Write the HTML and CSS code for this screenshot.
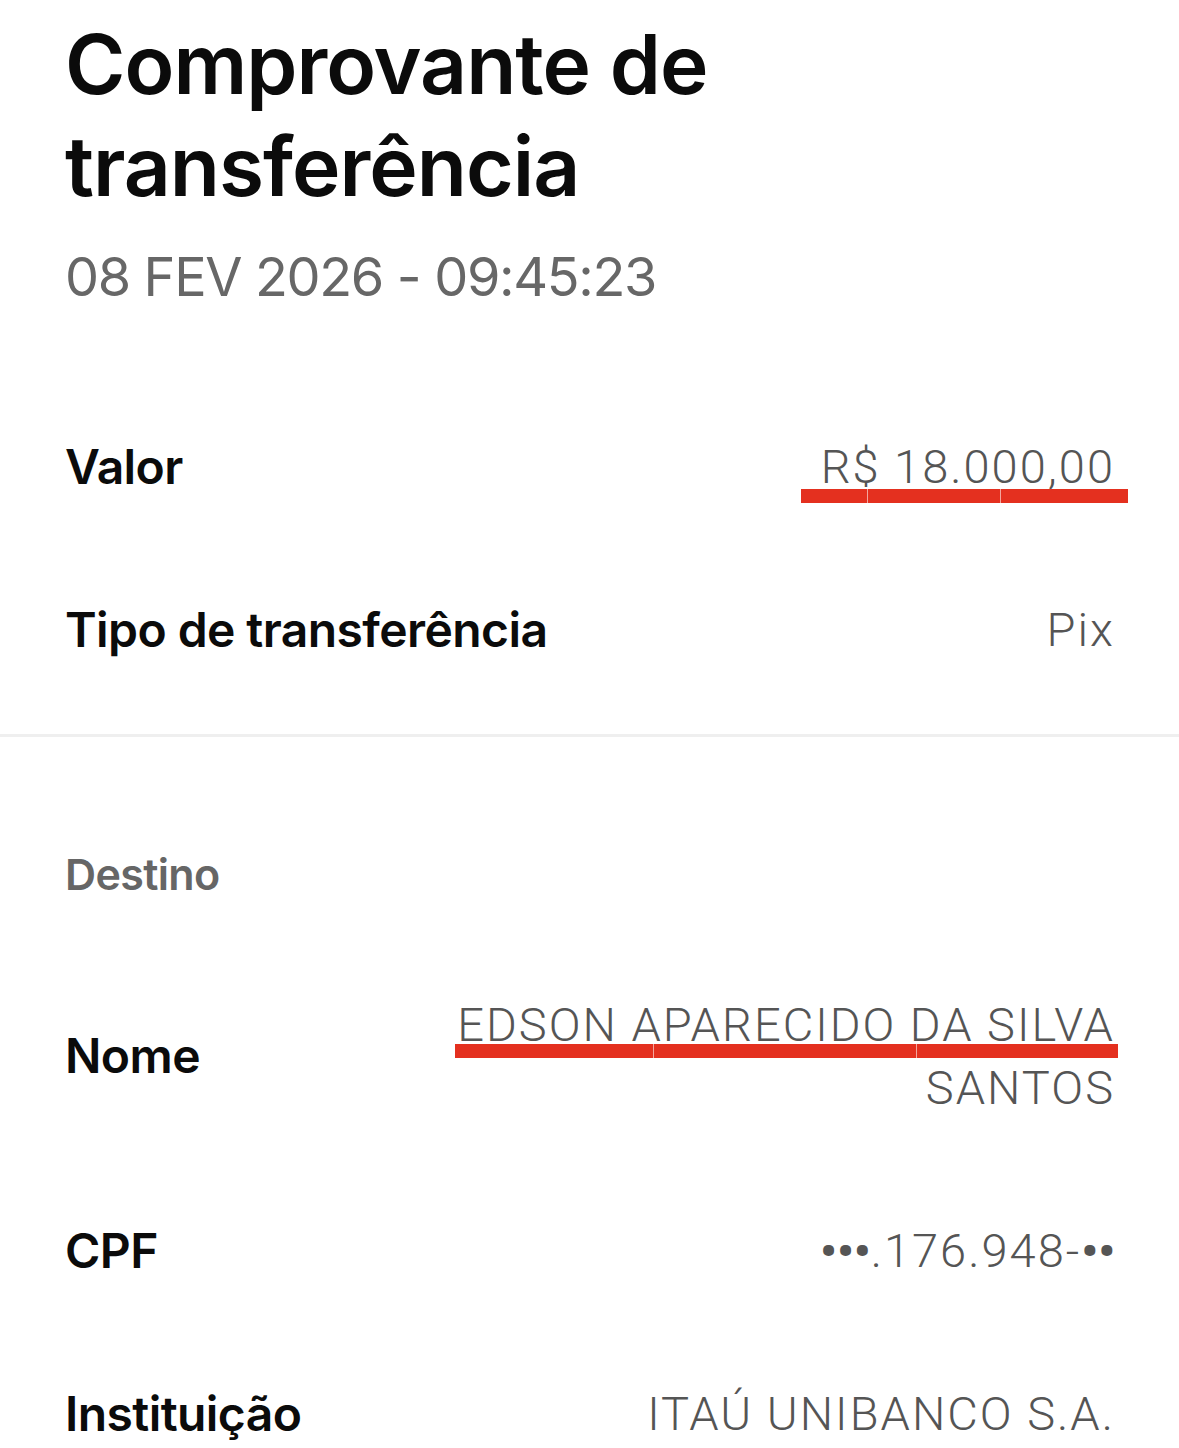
FILE: index.html
```html
<!DOCTYPE html>
<html lang="pt-BR">
<head>
  <meta charset="UTF-8" />
  <meta name="viewport" content="width=device-width, initial-scale=1.0" />
  <title>Comprovante de transferência</title>
  <link rel="stylesheet" href="styles.css">
</head>
<body>
  <main class="receipt">
    <h1 class="title">Comprovante de<br>transferência</h1>
    <p class="date">08 FEV 2026 - 09:45:23</p>

    <section class="group">
      <div class="row">
        <span class="label">Valor</span>
        <span class="value"><span class="mark mark-amount">R$ 18.000,00</span></span>
      </div>
      <div class="row">
        <span class="label">Tipo de transferência</span>
        <span class="value">Pix</span>
      </div>
    </section>

    <hr class="divider">

    <section class="group">
      <h2 class="group-title">Destino</h2>
      <div class="row">
        <span class="label">Nome</span>
        <span class="value">
          <span class="mark mark-name">EDSON APARECIDO DA SILVA</span>
          <span class="line">SANTOS</span>
        </span>
      </div>
      <div class="row">
        <span class="label">CPF</span>
        <span class="value"><span class="dots">•••</span>.176.948-<span class="dots">••</span></span>
      </div>
      <div class="row">
        <span class="label">Instituição</span>
        <span class="value">ITAÚ UNIBANCO S.A.</span>
      </div>
    </section>
  </main>
</body>
</html>
```

FILE: styles.css
```css
body {
  margin: 0;
  background: #fff;
  font-family: Inter, "Noto Sans", sans-serif;
  color: #0b0b0b;
}
.receipt {
  padding: 14px 0 0;
}
.title {
  margin: 0 65px;
  font-size: 82px;
  line-height: 102px;
  font-weight: 600;
  letter-spacing: -0.012em;
}
.date {
  margin: 28px 65px 0;
  font-size: 54px;
  line-height: 62px;
  font-weight: 400;
  color: #676767;
  letter-spacing: -0.025em;
}
.group {
  padding: 0 66px 0 65px;
}
.date + .group {
  margin-top: 77px;
}
.row {
  display: flex;
  justify-content: space-between;
  align-items: center;
  padding: 50px 0;
  gap: 40px;
}
.label {
  font-size: 48px;
  line-height: 62px;
  font-weight: 600;
  letter-spacing: -0.012em;
  white-space: nowrap;
}
.value {
  font-family: Roboto, "Liberation Sans", sans-serif;
  font-weight: 300;
  font-size: 47px;
  line-height: 63px;
  color: #555;
  text-align: right;
  letter-spacing: 0.043em;
  margin-right: -0.043em;
}
.dots {
  font-weight: 700;
  letter-spacing: 0;
}
.line {
  display: block;
}
.mark {
  position: relative;
  display: inline-block;
}
.mark::after {
  content: "";
  position: absolute;
  height: 14px;
  background: #e4301f;
}
.mark-amount::after {
  left: -20px;
  right: -13px;
  bottom: -5px;
  background: linear-gradient(to right, #e4301f 0 66px, #f3a69e 66px 67px, #e4301f 67px 199px, #f3a69e 199px 200px, #e4301f 200px);
}
.mark-name {
  display: block;
}
.mark-name::after {
  left: -2px;
  right: -3px;
  bottom: -2px;
  background: linear-gradient(to right, #e4301f 0 198px, #f3a69e 198px 199px, #e4301f 199px 461px, #f3a69e 461px 462px, #e4301f 462px);
}
.divider {
  margin: 23px 0 0;
  border: 0;
  height: 3px;
  background: #efefef;
}
.group-title {
  margin: 106px 0 0;
  font-size: 43px;
  line-height: 62px;
  font-weight: 600;
  color: #666;
  letter-spacing: -0.015em;
}
.group-title + .row {
  margin-top: 38px;
}
```
